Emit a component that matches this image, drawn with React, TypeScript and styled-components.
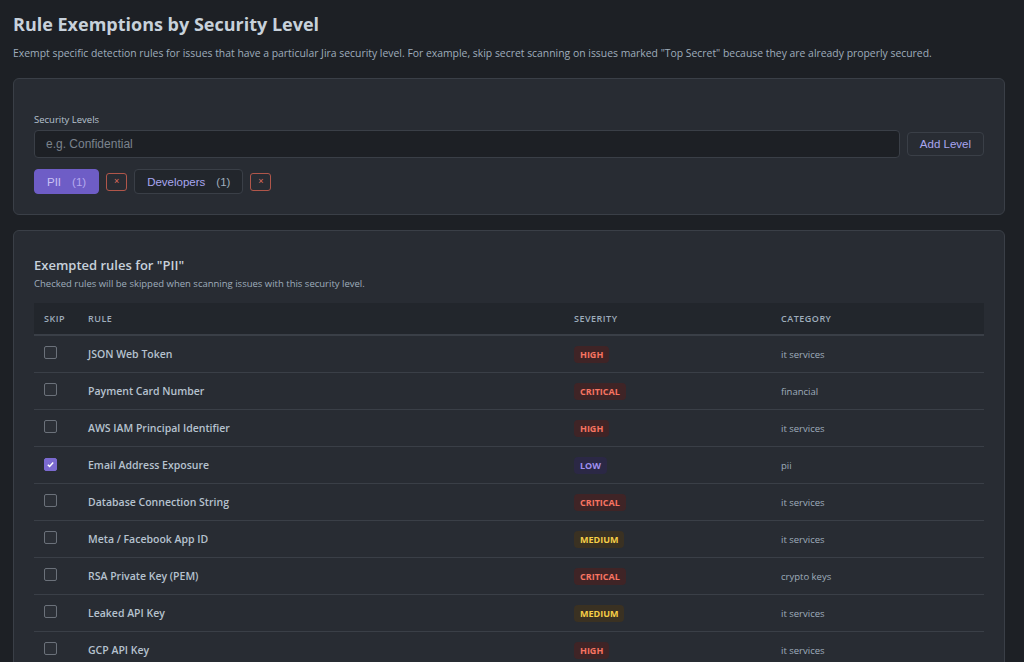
import React from "react";
import styled, { createGlobalStyle } from "styled-components";

const Global = createGlobalStyle`
  html, body { margin: 0; padding: 0; background: #1d2025; }
  body { font-family: "Open Sans", "Noto Sans", sans-serif; color: #c7d1db; }
`;

const Page = styled.div`
  padding: 10px 19px 0 13px;
  display: flex; flex-direction: column;
`;
const Title = styled.h1`
  margin: 0; font-size: 18px; font-weight: 700; color: #c7d1db; line-height: 28px;
`;
const Desc = styled.p`
  margin: 7px 0 17px; font-size: 10.4px; color: #9fadbc; line-height: 16px;
`;
const Card = styled.section`
  background: #282c33; border: 1px solid #3a3f47; border-radius: 6px;
  padding: 20px;
  margin-bottom: 15px;
`;
const Label = styled.div`
  font-size: 9.5px; color: #b6c2cf; margin: 14px 0 4px;
`;
const InputRow = styled.div` display: flex; gap: 7px; align-items: center; `;
const Input = styled.input`
  flex: 1; height: 28px; box-sizing: border-box; background: #1d2025;
  border: 1px solid #3a3f47; border-radius: 4px; padding: 0 11px;
  font-family: "Liberation Sans", Arial, sans-serif; font-size: 12px; color: #c7d1db;
  &::placeholder { color: #7b838d; }
`;
const AddBtn = styled.button`
  height: 24px; padding: 0 12px; background: #282c33; border: 1px solid #3a3f47; border-radius: 4px;
  color: #a8a6f0; font-family: "Liberation Sans", Arial, sans-serif; font-size: 11.5px;
`;
const Chips = styled.div` display: flex; gap: 7px; align-items: center; margin-top: 11px; `;
const Chip = styled.button<{ $active?: boolean }>`
  height: 25px; padding: 0 12px; border-radius: 4px;
  border: 1px solid ${p => (p.$active ? "#6e5dc6" : "#3a3f47")};
  background: ${p => (p.$active ? "#6e5dc6" : "#22262c")};
  color: ${p => (p.$active ? "#c9c1f5" : "#a8a6f0")};
  font-family: "Liberation Sans", Arial, sans-serif; font-size: 11.5px;
  display: flex; gap: 11px; align-items: center;
  span { color: ${p => (p.$active ? "#b5a9ee" : "#9fadbc")}; }
`;
const X = styled.button`
  width: 21px; height: 18px; padding: 0; border-radius: 3px; border: 1px solid #b0564a;
  background: transparent; color: #e06c5c; font-size: 9px; line-height: 1;
`;
const H2 = styled.h2` margin: 5px 0 3px; font-size: 13px; font-weight: 600; color: #c7d1db; `;
const Sub = styled.p` margin: 0 0 13px; font-size: 9.5px; color: #9fadbc; `;
const Table = styled.table`
  width: 100%; border-collapse: collapse; font-size: 10.5px;
  th { background: #22262c; height: 31px; text-align: left; font-size: 9px; font-weight: 600;
       letter-spacing: 0.5px; color: #9fadbc; border-bottom: 2px solid #3a3f47; padding: 0; }
  td { height: 36px; border-bottom: 1px solid #3a3f47; padding: 0; }
`;
const Skip = styled.td` padding-left: 10px !important; `;
const Box = styled.span<{ $on?: boolean }>`
  display: inline-flex; width: 13px; height: 13px; border-radius: 2px; box-sizing: border-box;
  border: 1px solid ${p => (p.$on ? "#7b6ad0" : "#6b717a")};
  background: ${p => (p.$on ? "#7b6ad0" : "#2c3037")};
  align-items: center; justify-content: center;
`;
const RuleName = styled.td` font-weight: 600; color: #b6c2cf; `;
const sevColors: Record<string, [string, string]> = {
  HIGH: ["#f87462", "#3f2426"],
  CRITICAL: ["#f87462", "#3f2426"],
  LOW: ["#9f8fef", "#2b2845"],
  MEDIUM: ["#f5cd47", "#3a3122"],
};
const Badge = styled.span<{ $s: string }>`
  display: inline-block; padding: 2px 6px; border-radius: 4px; font-size: 9px; font-weight: 700;
  color: ${p => sevColors[p.$s][0]}; background: ${p => sevColors[p.$s][1]};
`;
const Cat = styled.td` font-size: 9.5px; color: #9fadbc; `;

const rows: [string, string, string, boolean?][] = [
  ["JSON Web Token", "HIGH", "it services"],
  ["Payment Card Number", "CRITICAL", "financial"],
  ["AWS IAM Principal Identifier", "HIGH", "it services"],
  ["Email Address Exposure", "LOW", "pii", true],
  ["Database Connection String", "CRITICAL", "it services"],
  ["Meta / Facebook App ID", "MEDIUM", "it services"],
  ["RSA Private Key (PEM)", "CRITICAL", "crypto keys"],
  ["Leaked API Key", "MEDIUM", "it services"],
  ["GCP API Key", "HIGH", "it services"],
];

export default function App() {
  return (
    <Page>
      <Global />
      <Title>Rule Exemptions by Security Level</Title>
      <Desc>Exempt specific detection rules for issues that have a particular Jira security level. For example, skip secret scanning on issues marked "Top Secret" because they are already properly secured.</Desc>
      <Card>
        <Label>Security Levels</Label>
        <InputRow>
          <Input placeholder="e.g. Confidential" />
          <AddBtn>Add Level</AddBtn>
        </InputRow>
        <Chips>
          <Chip $active>PII <span>(1)</span></Chip>
          <X>×</X>
          <Chip>Developers <span>(1)</span></Chip>
          <X>×</X>
        </Chips>
      </Card>
      <Card>
        <H2>Exempted rules for "PII"</H2>
        <Sub>Checked rules will be skipped when scanning issues with this security level.</Sub>
        <Table>
          <thead>
            <tr>
              <th style={{ width: 44, paddingLeft: 10 }}>SKIP</th>
              <th style={{ width: 486 }}>RULE</th>
              <th style={{ width: 207 }}>SEVERITY</th>
              <th>CATEGORY</th>
            </tr>
          </thead>
          <tbody>
            {rows.map(([n, s, c, on]) => (
              <tr key={n}>
                <Skip>
                  <Box $on={on}>
                    {on && (
                      <svg width="9" height="9" viewBox="0 0 10 10">
                        <path d="M2 5.2l2 2 4-4.5" stroke="#fff" strokeWidth="1.6" fill="none" />
                      </svg>
                    )}
                  </Box>
                </Skip>
                <RuleName>{n}</RuleName>
                <td><Badge $s={s}>{s}</Badge></td>
                <Cat>{c}</Cat>
              </tr>
            ))}
          </tbody>
        </Table>
      </Card>
    </Page>
  );
}
